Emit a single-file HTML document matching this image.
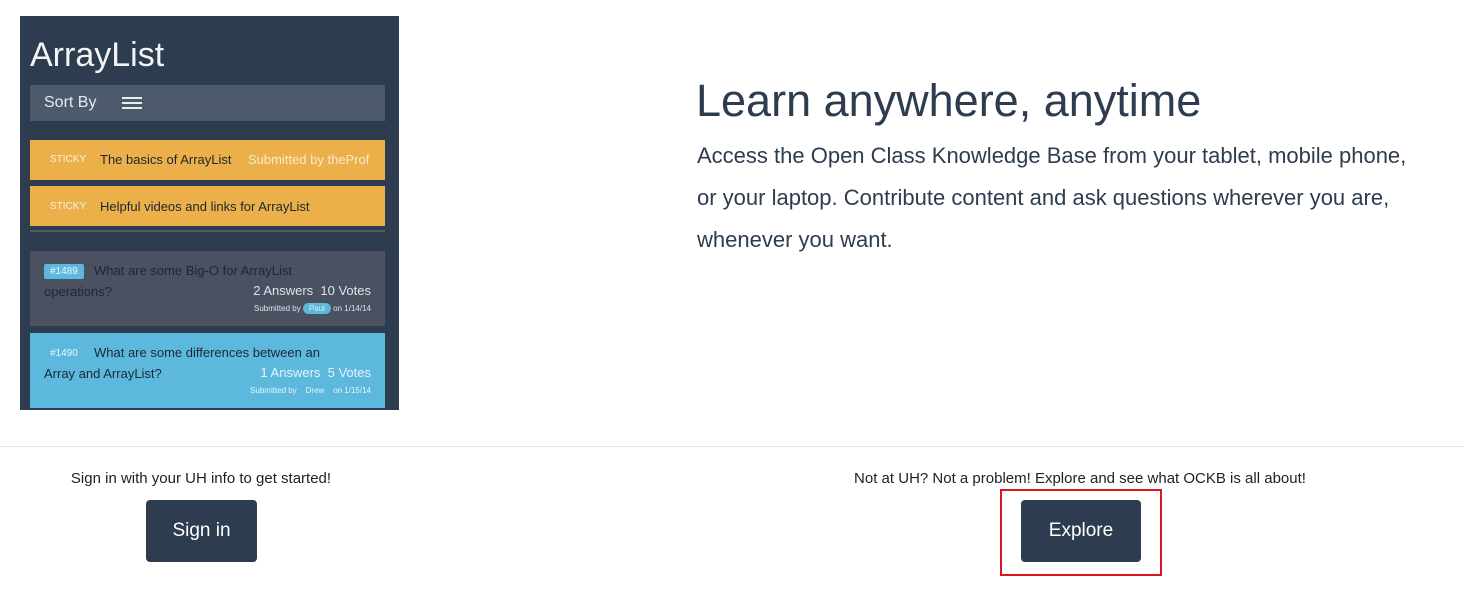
<!DOCTYPE html>
<html><head><style>
*{margin:0;padding:0;box-sizing:border-box}
body{width:1464px;height:595px;background:#fff;font-family:"Liberation Sans",sans-serif;position:relative;overflow:hidden;color:#2e3c50}
.a{position:absolute}
.shot{left:20px;top:16px;width:379px;height:394px;background:#2e3c50;color:#fff}
.bar{left:10px;width:355px}
.st{font-size:10px;color:#f5f0e6}
.q{font-size:13px;color:#1f2633}
.btn{background:#2e3c50;color:#fff;font-size:19px;border-radius:4px;display:flex;align-items:center;justify-content:center}
</style></head><body>
<div class="a shot">
 <div class="a" style="left:10px;top:20px;font-size:34px;color:#f2f4f6">ArrayList</div>
 <div class="a bar" style="top:69px;height:36px;background:#4d5a6b;font-size:16px;color:#e8ebee;padding:9px 0 0 14px">Sort By
  <span class="a" style="left:92px;top:12px;width:20px;height:2px;background:#e8ebee;box-shadow:0 5px 0 #e8ebee,0 10px 0 #e8ebee"></span></div>
 <div class="a bar" style="top:124px;height:40px;background:#ebb04a"><span class="a st" style="left:20px;top:14px">STICKY</span><span class="a q" style="left:70px;top:12px;font-size:13px">The basics of ArrayList</span><span class="a" style="left:218px;top:12px;font-size:13px;color:#f6ead0">Submitted by theProf</span></div>
 <div class="a bar" style="top:170px;height:40px;background:#ebb04a"><span class="a st" style="left:20px;top:15px">STICKY</span><span class="a q" style="left:70px;top:13px">Helpful videos and links for ArrayList</span></div>
 <div class="a bar" style="top:214px;height:2px;background:#4d5a6b"></div>
 <div class="a bar" style="top:235px;height:75px;background:#4a5261">
  <span class="a" style="left:14px;top:13px;background:#5db8de;color:#eaf6fb;font-size:10px;padding:2px 6px;border-radius:2px">#1489</span>
  <span class="a q" style="left:64px;top:12px">What are some Big-O for ArrayList</span>
  <span class="a q" style="left:14px;top:33px">operations?</span>
  <span class="a" style="right:14px;top:32px;font-size:13px;color:#dfe3e8">2 Answers&nbsp; 10 Votes</span>
  <span class="a" style="right:14px;top:53px;font-size:8px;color:#dfe3e8">Submitted by <span style="background:#5db8de;border-radius:7px;padding:1px 6px">Paul</span> on 1/14/14</span>
 </div>
 <div class="a bar" style="top:317px;height:75px;background:#5db8de">
  <span class="a" style="left:20px;top:15px;color:#eaf6fb;font-size:10px">#1490</span>
  <span class="a q" style="left:64px;top:12px">What are some differences between an</span>
  <span class="a q" style="left:14px;top:33px">Array and ArrayList?</span>
  <span class="a" style="right:14px;top:32px;font-size:13px;color:#e6f4fa">1 Answers&nbsp; 5 Votes</span>
  <span class="a" style="right:14px;top:53px;font-size:8px;color:#e6f4fa">Submitted by &nbsp;&nbsp; Drew &nbsp;&nbsp; on 1/15/14</span>
 </div>
</div>
<div class="a" style="left:696px;top:75px;font-size:45px;color:#2e3c50">Learn anywhere, anytime</div>
<div class="a" style="left:697px;top:135px;width:745px;font-size:22px;line-height:42px;color:#2e3c50">Access the Open Class Knowledge Base from your tablet, mobile phone,<br>or your laptop. Contribute content and ask questions wherever you are,<br>whenever you want.</div>
<div class="a" style="left:0;top:446px;width:1464px;height:1px;background:#e6e6e6"></div>
<div class="a" style="left:0;top:470px;width:402px;text-align:center;font-size:15px;color:#222">Sign in with your UH info to get started!</div>
<div class="a" style="left:780px;top:470px;width:600px;text-align:center;font-size:15px;color:#222">Not at UH? Not a problem! Explore and see what OCKB is all about!</div>
<div class="a btn" style="left:146px;top:500px;width:111px;height:62px">Sign in</div>
<div class="a btn" style="left:1021px;top:500px;width:120px;height:62px">Explore</div>
<div class="a" style="left:1000px;top:489px;width:162px;height:87px;border:2px solid #e0161e"></div>
</body></html>
